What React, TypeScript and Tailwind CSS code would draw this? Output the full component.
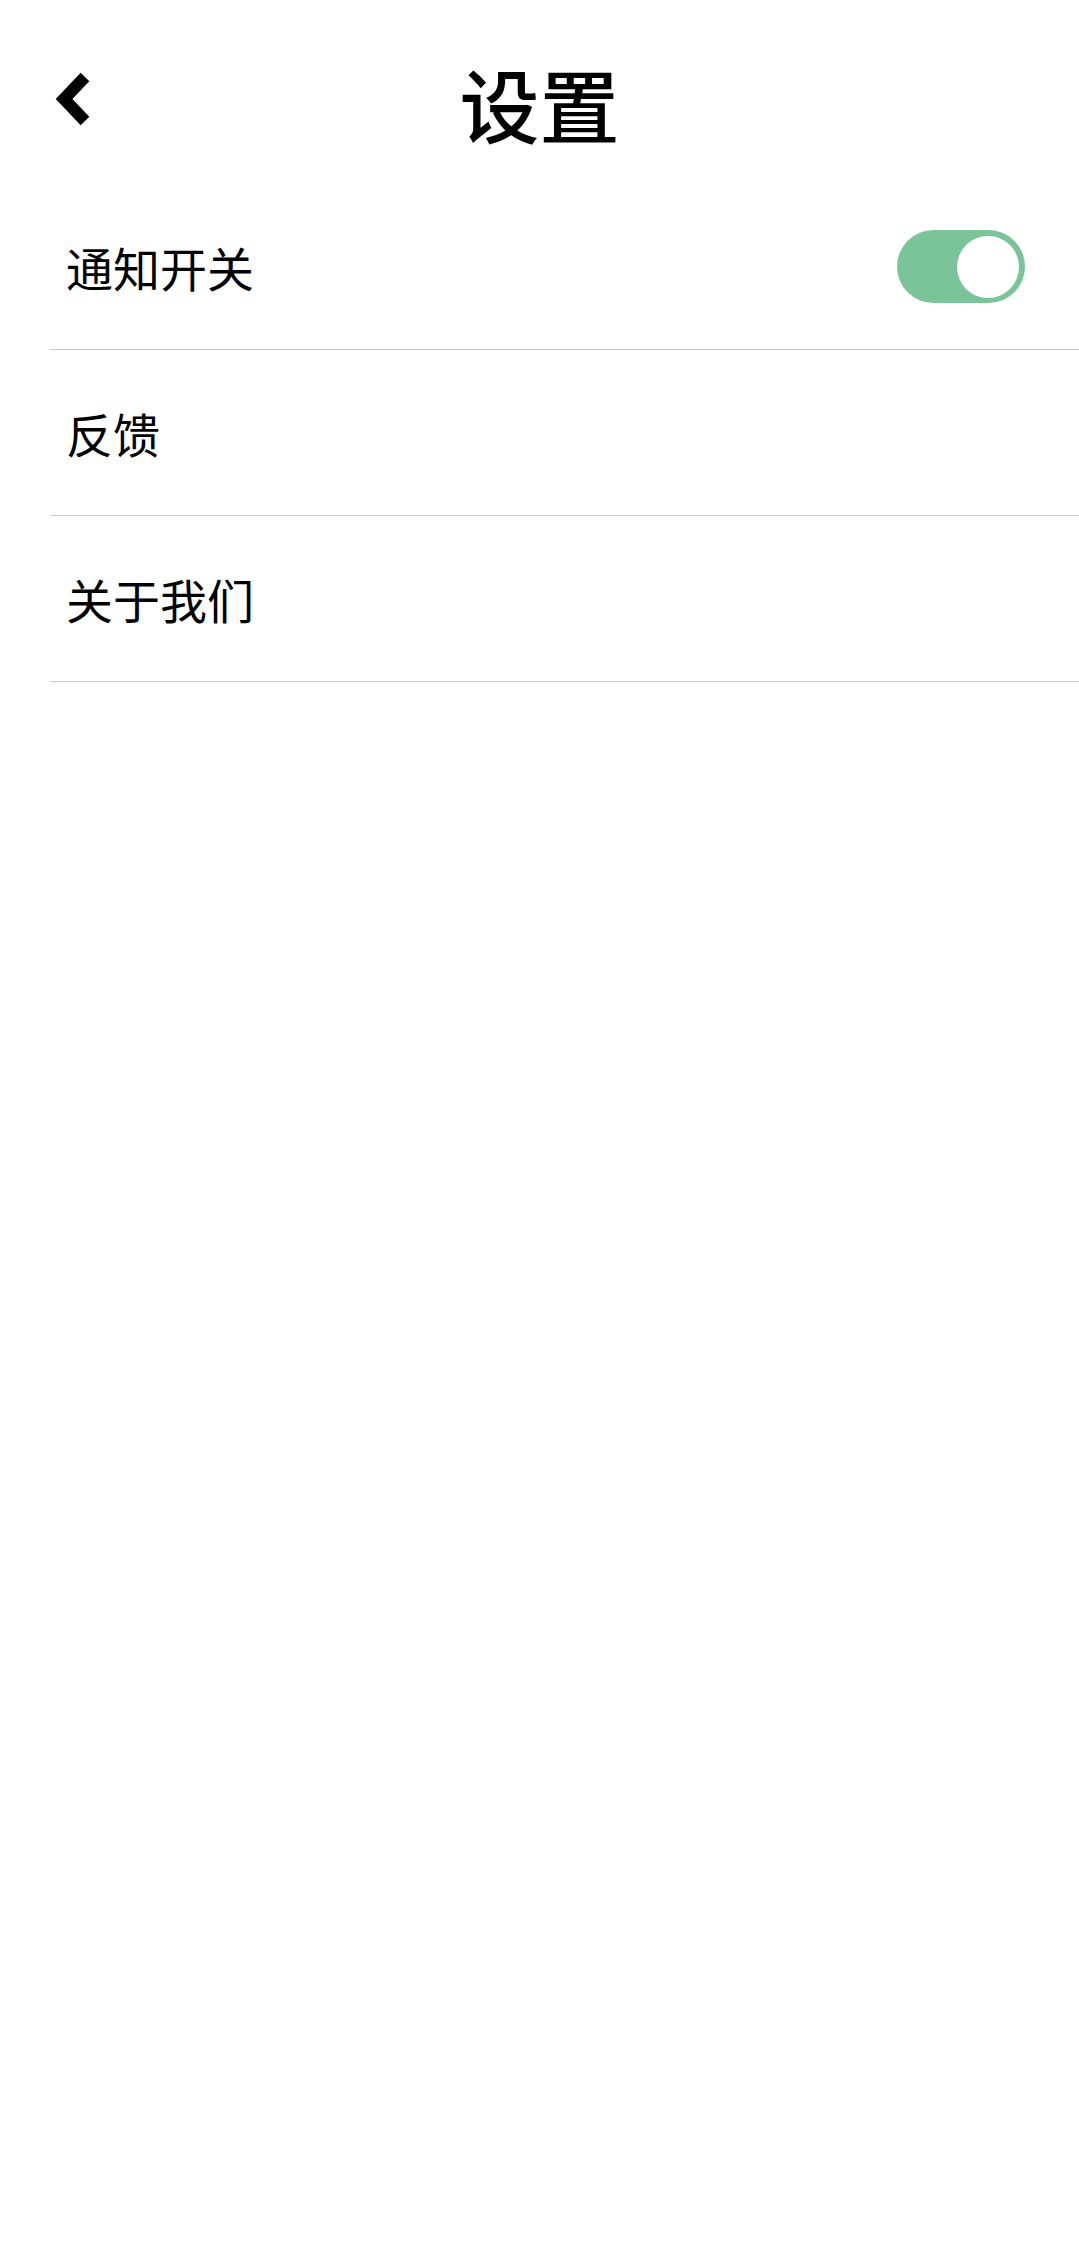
import { useState } from "react";

const rows = [
  { label: "通知开关", toggle: true },
  { label: "反馈" },
  { label: "关于我们" },
];

function Toggle({ on, onChange }: { on: boolean; onChange: () => void }) {
  return (
    <button
      onClick={onChange}
      className={`flex h-[73px] w-[128px] items-center rounded-full px-[6px] ${
        on ? "justify-end bg-[#7bc398]" : "justify-start bg-[#e3e3e3]"
      }`}
    >
      <span className="block h-[62px] w-[62px] rounded-full bg-white" />
    </button>
  );
}

export default function App() {
  const [notify, setNotify] = useState(true);

  return (
    <div
      className="min-h-screen bg-white text-black"
      style={{ fontFamily: '"Noto Sans CJK SC", "Noto Sans", sans-serif' }}
    >
      <header className="grid h-[184px] grid-cols-[1fr_auto_1fr] items-start">
        <button className="ml-[53px] mt-[70px] flex h-[64px] w-[48px] items-center">
          <svg width="40" height="60" viewBox="0 0 40 60">
            <polyline
              points="32,5 11,27 32,49"
              fill="none"
              stroke="#000"
              strokeWidth="12"
              strokeLinecap="butt"
              strokeLinejoin="miter"
            />
          </svg>
        </button>
        <h1 className="mt-[62px] text-[80px] font-medium leading-none">设置</h1>
        <div />
      </header>

      <div className="ml-[50px]">
        {rows.map((row) => (
          <div
            key={row.label}
            className="flex h-[166px] items-center justify-between border-b border-[#c9c9c9] pl-[16px] pr-[54px]"
          >
            <span className="text-[47px] leading-none">{row.label}</span>
            {row.toggle && (
              <Toggle on={notify} onChange={() => setNotify(!notify)} />
            )}
          </div>
        ))}
      </div>
    </div>
  );
}
